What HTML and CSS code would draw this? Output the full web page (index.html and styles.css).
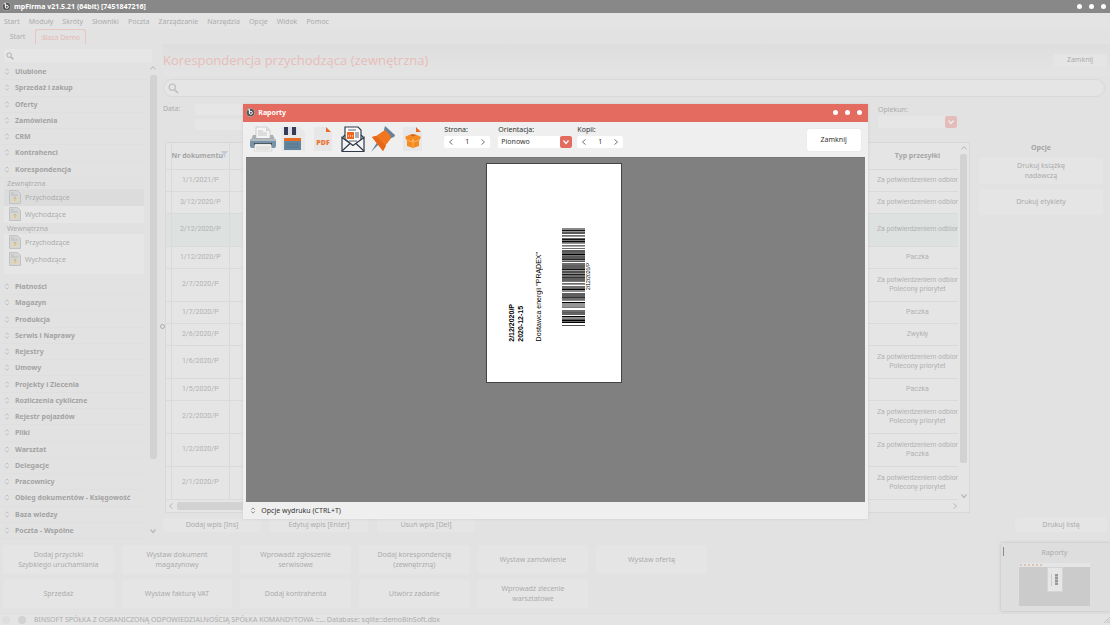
FILE: index.html
```html
<!DOCTYPE html>
<html lang="pl">
<head>
<meta charset="utf-8">
<title>mpFirma v21.5.21</title>
<link rel="stylesheet" href="styles.css">
<script src="app.js" defer></script>
</head>
<body>
<svg class="defs" aria-hidden="true">
  <symbol id="logo" viewBox="0 0 12 12"><circle cx="6" cy="6" r="5.4" fill="#555" stroke="#bbb" stroke-width=".8"/><path d="M2.500 2.600 4.600 2v4M4.400 6.400a2 2 0 1 0 4 0 2 2 0 1 0-4 0" fill="none" stroke="#fff" stroke-width="1.300"/></symbol>
  <symbol id="sort" viewBox="0 0 6 8"><path d="M1 3 3 1l2 2M1 5l2 2 2-2" fill="none" stroke="currentColor"/></symbol>
  <symbol id="search" viewBox="0 0 12 12"><circle cx="4.7" cy="4.7" r="3.4" fill="none" stroke="currentColor" stroke-width="1.4"/><path d="m7.4 7.4 3.6 3.6" stroke="currentColor" stroke-width="2"/></symbol>
  <symbol id="up" viewBox="0 0 8 8"><path d="m1.5 5.5 2.500-3 2.500 3" fill="none" stroke="currentColor"/></symbol>
  <symbol id="down" viewBox="0 0 8 8"><path d="m1.500 2.500 2.500 3 2.500-3" fill="none" stroke="currentColor" stroke-width="1.200"/></symbol>
  <symbol id="left" viewBox="0 0 8 8"><path d="m5.500 1.500-3 2.500 3 2.500" fill="none" stroke="currentColor"/></symbol>
  <symbol id="right" viewBox="0 0 8 8"><path d="m2.500 1.500 3 2.500-3 2.500" fill="none" stroke="currentColor"/></symbol>
  <symbol id="file" viewBox="0 0 12 14"><path d="M.5.5h8l3 3v10H.5z" fill="#d3d5d6" stroke="#c0c2c4"/><path d="M2 3h3M2 5h7" stroke="#bbb"/><path d="M3 7h6v5H3z" fill="#e3d6b4"/><path d="M6 7v4M4.500 8.500 6 7l1.500 1.500" fill="none" stroke="#b9b3a3" stroke-width=".8"/></symbol>
</svg>
<div class="app">
  <header class="titlebar">
    <svg class="logo"><use href="#logo"/></svg><span>mpFirma v21.5.21 (64bit) [7451847216]</span>
    <span class="dots"><i></i><i></i><i></i></span>
  </header>
  <nav class="menubar">
    <a href="#">Start</a><a href="#">Moduły</a><a href="#">Skróty</a><a href="#">Słowniki</a><a href="#">Poczta</a><a href="#">Zarządzanie</a><a href="#">Narzędzia</a><a href="#">Opcje</a><a href="#">Widok</a><a href="#">Pomoc</a>
  </nav>
  <div class="tabs"><button class="tab">Start</button><button class="tab active">:Baza Demo</button></div>

  <div class="workspace">
    <aside class="sidebar">
      <label class="side-search"><svg class="ic8"><use href="#search"/></svg><input type="text" aria-label="Szukaj modułu"></label>
      <div class="side-body">
        <div class="side-list">
          <button class="group"><svg><use href="#sort"/></svg>Ulubione</button>
          <button class="group"><svg><use href="#sort"/></svg>Sprzedaż i zakup</button>
          <button class="group"><svg><use href="#sort"/></svg>Oferty</button>
          <button class="group"><svg><use href="#sort"/></svg>Zamówienia</button>
          <button class="group"><svg><use href="#sort"/></svg>CRM</button>
          <button class="group"><svg><use href="#sort"/></svg>Kontrahenci</button>
          <button class="group"><svg><use href="#sort"/></svg>Korespondencja</button>
          <div class="subpanel">
            <h3>Zewnętrzna</h3>
            <a href="#" class="selected"><svg><use href="#file"/></svg>Przychodzące</a>
            <a href="#"><svg><use href="#file"/></svg>Wychodzące</a>
            <h3>Wewnętrzna</h3>
            <a href="#"><svg><use href="#file"/></svg>Przychodzące</a>
            <a href="#"><svg><use href="#file"/></svg>Wychodzące</a>
          </div>
          <button class="group"><svg><use href="#sort"/></svg>Płatności</button>
          <button class="group"><svg><use href="#sort"/></svg>Magazyn</button>
          <button class="group"><svg><use href="#sort"/></svg>Produkcja</button>
          <button class="group"><svg><use href="#sort"/></svg>Serwis i Naprawy</button>
          <button class="group"><svg><use href="#sort"/></svg>Rejestry</button>
          <button class="group"><svg><use href="#sort"/></svg>Umowy</button>
          <button class="group"><svg><use href="#sort"/></svg>Projekty i Zlecenia</button>
          <button class="group"><svg><use href="#sort"/></svg>Rozliczenia cykliczne</button>
          <button class="group"><svg><use href="#sort"/></svg>Rejestr pojazdów</button>
          <button class="group"><svg><use href="#sort"/></svg>Pliki</button>
          <button class="group"><svg><use href="#sort"/></svg>Warsztat</button>
          <button class="group"><svg><use href="#sort"/></svg>Delegacje</button>
          <button class="group"><svg><use href="#sort"/></svg>Pracownicy</button>
          <button class="group"><svg><use href="#sort"/></svg>Obieg dokumentów - Księgowość</button>
          <button class="group"><svg><use href="#sort"/></svg>Baza wiedzy</button>
          <button class="group"><svg><use href="#sort"/></svg>Poczta - Wspólne</button>
        </div>
        <div class="vscroll side-scroll"><svg class="ic8"><use href="#up"/></svg><i></i><svg class="ic8"><use href="#down"/></svg></div>
      </div>
    </aside>
    <div class="splitter"><i></i></div>

    <main class="main">
      <div class="heading"><h1>Korespondencja przychodząca (zewnętrzna)</h1><button class="btn">Zamknij</button></div>
      <label class="search"><svg><use href="#search"/></svg><input type="text" aria-label="Szukaj"></label>
      <div class="content">
        <div class="left">
          <div class="filters">
            <div class="date"><label for="d1">Data:</label><div><input id="d1" type="text"><input type="text" aria-label="Data do"></div></div>
            <div class="owner"><label for="own">Opiekun:</label><div class="combo"><select id="own"><option></option></select><span><svg class="ic8"><use href="#down"/></svg></span></div></div>
          </div>
          <div class="grid">
            <div class="grid-top">
              <table>
                <colgroup><col class="c-gut"><col class="c-nr"><col><col class="c-type"></colgroup>
                <thead><tr><th></th><th class="sorted">Nr dokumentu<svg class="funnel" viewBox="0 0 8 8"><path d="M0 0h8L5 4v4L3 6V4z"/></svg></th><th></th><th>Typ przesyłki</th></tr></thead>
                <tbody>
                  <tr><td></td><td>1/1/2021/P</td><td></td><td>Za potwierdzeniem odbior</td></tr>
                  <tr><td></td><td>3/12/2020/P</td><td></td><td>Za potwierdzeniem odbior</td></tr>
                  <tr class="tall current"><td></td><td>2/12/2020/P</td><td></td><td>Za potwierdzeniem odbior</td></tr>
                  <tr><td></td><td>1/12/2020/P</td><td></td><td>Paczka</td></tr>
                  <tr class="tall"><td></td><td>2/7/2020/P</td><td></td><td>Za potwierdzeniem odbior<br>Polecony priorytet</td></tr>
                  <tr><td></td><td>1/7/2020/P</td><td></td><td>Paczka</td></tr>
                  <tr><td></td><td>2/6/2020/P</td><td></td><td>Zwykły</td></tr>
                  <tr class="tall"><td></td><td>1/6/2020/P</td><td></td><td>Za potwierdzeniem odbior<br>Polecony priorytet</td></tr>
                  <tr><td></td><td>1/5/2020/P</td><td></td><td>Paczka</td></tr>
                  <tr class="tall"><td></td><td>2/2/2020/P</td><td></td><td>Za potwierdzeniem odbior<br>Polecony priorytet</td></tr>
                  <tr class="tall"><td></td><td>1/2/2020/P</td><td></td><td>Za potwierdzeniem odbior<br>Paczka</td></tr>
                  <tr class="tall"><td></td><td>2/1/2020/P</td><td></td><td>Za potwierdzeniem odbior<br>Polecony priorytet</td></tr>
                </tbody>
              </table>
              <div class="vscroll grid-scroll"><svg class="ic8"><use href="#up"/></svg><i></i><svg class="ic8"><use href="#down"/></svg></div>
            </div>
            <div class="hscroll"><svg class="ic8"><use href="#left"/></svg><i></i><svg class="ic8"><use href="#right"/></svg></div>
          </div>
        </div>
        <section class="options"><h2>Opcje</h2><button class="btn">Drukuj książkę<br>nadawczą</button><button class="btn">Drukuj etykiety</button></section>
      </div>
      <div class="actions"><button class="btn">Dodaj wpis [Ins]</button><button class="btn">Edytuj wpis [Enter]</button><button class="btn">Usuń wpis [Del]</button><button class="btn print">Drukuj listę</button></div>
    </main>
  </div>

  <div class="quick">
    <button class="btn">Dodaj przyciski<br>Szybkiego uruchamiania</button><button class="btn">Wystaw dokument<br>magazynowy</button><button class="btn">Wprowadź zgłoszenie<br>serwisowe</button><button class="btn">Dodaj korespondencję<br>(zewnętrzną)</button><button class="btn">Wystaw zamówienie</button><button class="btn">Wystaw ofertę</button>
    <button class="btn">Sprzedaż</button><button class="btn">Wystaw fakturę VAT</button><button class="btn">Dodaj kontrahenta</button><button class="btn">Utwórz zadanie</button><button class="btn">Wprowadź zlecenie<br>warsztatowe</button>
  </div>
  <footer class="status"><i></i><i class="dark"></i><span>BINSOFT SPÓŁKA Z OGRANICZONĄ ODPOWIEDZIALNOŚCIĄ SPÓŁKA KOMANDYTOWA ::... Database: sqlite::demoBinSoft.dbx</span><svg viewBox="0 0 8 8"><path d="M1 8 8 1M4 8l4-4M6.500 8 8 6.500" stroke="#bbb"/></svg></footer>
</div>

<aside class="preview">
  <h2>Raporty</h2>
  <div class="thumb"><div class="thumb-tools"><i></i><i></i><i></i><i></i><i></i><i></i></div><div class="thumb-view"><div class="thumb-page"><b></b><i></i></div></div></div>
</aside>

<div class="overlay">
  <section class="dialog" role="dialog" aria-label="Raporty">
    <header class="dialog-title"><svg class="logo"><use href="#logo"/></svg><span>Raporty</span><span class="dots"><i></i><i></i><i></i></span></header>
    <div class="toolbar">
      <div class="tools">
        <button aria-label="Drukuj"><svg viewBox="0 0 26 26"><path d="M6 1h11l3 3v9H6z" fill="#f4f4f4" stroke="#bbb" stroke-width=".6"/><path d="M16 1v4h4" fill="#d5d5d5"/><path d="M8 5h5M8 7h9M8 9h9" stroke="#b9b9b9" stroke-width=".8"/><path d="M3 9h3v3h14V9h3l2 5H1z" fill="#a9b0b3"/><path d="M0 13h26v7q0 2-2 2H2q-2 0-2-2z" fill="#7893a7"/><path d="M0 13h26v2H0z" fill="#b4bcc0"/><path d="M4 17h18v2H4z" fill="#33424d"/><path d="M5 18h16l1 7H4z" fill="#f2f2ee" stroke="#bbb" stroke-width=".4"/><path d="M6 21h14M6 23h14" stroke="#c5c5c5" stroke-width=".7"/></svg></button>
        <button aria-label="Zapisz"><svg viewBox="0 0 26 26"><path d="M1 1h19l5 5v19H1z" fill="#e8e8e8"/><path d="M4 1h13v8H4z" fill="#dcdfe5"/><path d="M4 1h4v8H4zM12 1h4v8h-4z" fill="#343c57"/><path d="M4 12h17v12H4z" fill="#64859c"/><path d="M4 12h17v3H4z" fill="#e96d24"/><path d="M6 18h13M6 21h13" stroke="#547489"/></svg></button>
        <button aria-label="PDF"><svg viewBox="0 0 26 26"><path d="M4 1h12l6 6v18H4z" fill="#e7e7e7"/><path d="M16 1l5 5h-5z" fill="#e96d24"/><text x="13" y="19" class="pdf">PDF</text></svg></button>
        <button aria-label="Wyślij e-mail"><svg viewBox="0 0 26 26"><path d="M5 13V1h13l3 3v10l-8 6z" fill="#fff" stroke="#303a49" stroke-width="1.200"/><path d="M2 11.500v14h22v-14l-11 8z" fill="#f4f4f4" stroke="#303a49" stroke-width="1.200"/><path d="m2 25 8-7.500M24 25l-8-7.500M2 12l3-3M24 12l-3-3" fill="none" stroke="#303a49" stroke-width="1.200"/><path d="M7 6h7v7H7z" fill="#f1661c"/><path d="M8 4h8M15 7h4M15 9h4M15 11h4M9 15h8" stroke="#303a49" stroke-width=".8"/><path d="M8 10h5" stroke="#fff" stroke-dasharray="1 1"/></svg></button>
        <button aria-label="Przypnij"><svg viewBox="0 0 26 26"><path d="m10 17-9 9 7-11z" fill="#66839b"/><path d="m2 11 4-1 9-6V1l10 9-3 1-7 9-2 5z" fill="#f1761f"/><path d="m6 10 10 10-3 5L2 11z" fill="#e66718"/><path d="m15 0 10 9-1 2-3 1-7-8z" fill="#66839b"/><path d="m15 4 6 6-5 5-6-7z" fill="#f1761f"/></svg></button>
        <button aria-label="Archiwum"><svg viewBox="0 0 26 26"><path d="M3 1h13l6 6v18H3z" fill="#e7e7e7"/><path d="M16 1l5 5h-5z" fill="#e96d24"/><path d="m5 11 4-2 4 2 4-2 4 2-2 4v5l-6 2-6-2v-5z" fill="#f58a1e"/><path d="m9 9 4 2 4-2-4-1z" fill="#d8650e"/><path d="m7 14 5 2 1-3 1 3 5-2M13 14v7" fill="none" stroke="#ffc078" stroke-width=".7"/></svg></button>
      </div>
      <div class="field"><label for="pg">Strona:</label><div class="spin"><button aria-label="Poprzednia"><svg class="ic8"><use href="#left"/></svg></button><input id="pg" type="text" value="1"><button aria-label="Następna"><svg class="ic8"><use href="#right"/></svg></button></div></div>
      <div class="field orient"><label for="or">Orientacja:</label><div class="combo live"><select id="or"><option>Pionowo</option></select><span><svg class="ic8"><use href="#down"/></svg></span></div></div>
      <div class="field"><label for="cp">Kopii:</label><div class="spin"><button aria-label="Mniej"><svg class="ic8"><use href="#left"/></svg></button><input id="cp" type="text" value="1"><button aria-label="Więcej"><svg class="ic8"><use href="#right"/></svg></button></div></div>
      <button class="close">Zamknij</button>
    </div>
    <div class="viewer">
      <article class="page">
        <p class="bold">2/12/2020/P<br>2020-12-15</p>
        <p class="name">Dostawca energii "PRĄDEX"</p>
        <div class="code"><svg id="barcode" viewBox="0 0 23 98" preserveAspectRatio="none"></svg><p>2/12/2020/P</p></div>
      </article>
    </div>
    <button class="print-options"><svg><use href="#sort"/></svg>Opcje wydruku (CTRL+T)</button>
  </section>
</div>
</body>
</html>
```
FILE: app.js
```js
// Each entry is [first row, row count, grey level]; uncovered rows stay white.
const bars = [[0,2,136],[2,1,20],[3,1,150],[4,2,90],[7,1,110],[8,1,150],[10,1,100],[11,1,20],[12,1,120],[13,1,10],[14,1,110],[15,1,150],[17,1,120],[18,1,170],[20,1,110],[22,2,90],[24,2,100],[26,1,0],[27,1,120],[28,3,90],[31,1,40],[32,1,150],[33,1,90],[35,2,110],[37,4,95],[41,1,20],[42,1,150],[43,2,80],[45,1,140],[46,1,30],[47,2,110],[49,1,50],[50,3,95],[53,1,120],[55,1,110],[56,1,150],[58,2,110],[60,1,100],[61,1,0],[62,2,140],[65,4,95],[69,1,50],[70,2,110],[72,1,140],[74,1,0],[75,4,150],[79,1,120],[82,2,110],[84,1,90],[85,2,100],[88,1,0],[89,2,140],[91,1,90],[92,1,0],[93,1,110],[94,1,0],[97,1,80]];
document.getElementById('barcode').innerHTML = bars.map(([y, h, g]) => `<rect x="0" y="${y}" width="23" height="${h}" fill="rgb(${g},${g},${g})"/>`).join('');
```
FILE: styles.css
```css
* { box-sizing: border-box; }
html, body { margin: 0; height: 100%; }
body { background: #e2e2e2; color: #acacac; font: 7px/9px "Noto Sans", "Open Sans", sans-serif; overflow: hidden; position: relative; }
button, input, select { font: inherit; color: inherit; border: 0; background: none; padding: 0; margin: 0; min-width: 0; border-radius: 2px; }
a { color: inherit; text-decoration: none; }
h1, h2, h3, p { margin: 0; font: inherit; }
svg { display: block; flex: none; }
.defs { display: none; }
.ic8 { width: 8px; height: 8px; }
.logo { width: 9px; height: 9px; }
.app { min-height: 100vh; display: flex; flex-direction: column; }

.titlebar { display: flex; align-items: center; gap: 3px; height: 13px; padding: 0 4px 1px 2px; background: #888; color: #fff; font-weight: 700; }
.dots { display: flex; gap: 7px; margin-left: auto; }
.dots i { width: 5px; height: 5px; border-radius: 50%; background: #fff; }
.menubar { display: flex; align-items: center; gap: 9px; height: 16px; padding: 0 4px; background: #e4e4e4; }
.tabs { display: flex; height: 15px; }
.tab { width: 35px; }
.tab.active { width: 51px; border: 1px solid #e6c5c3; border-bottom: 0; color: #e6b9b6; border-radius: 3px 3px 0 0; }

.workspace { flex: 1; display: flex; min-height: 0; }
.sidebar { width: 157px; display: flex; flex-direction: column; padding-top: 5px; }
.side-search { display: flex; align-items: center; height: 13px; margin: 0 5px 2px 4px; padding-left: 2px; background: #e6e6e6; border-radius: 2px; }
.side-search input { flex: 1; }
.side-body { flex: 1; display: flex; }
.side-list { flex: 1; display: flex; flex-direction: column; padding-right: 1px; }
.group { flex: 1; display: flex; align-items: center; gap: 5px; padding-left: 4px; border-bottom: 1px solid #dfdfdf; font-weight: 700; color: #a2a2a2; text-align: left; }
.group svg { width: 6px; height: 7px; color: #bbb; }
.subpanel { margin: 0 4px 5px; padding-bottom: 6px; background: #e6e6e6; }
.subpanel h3 { padding: 1px 3px 0; height: 11px; background: #e1e1e1; }
.subpanel a { display: flex; align-items: center; gap: 4px; height: 17px; padding-left: 5px; }
.subpanel a svg { width: 12px; height: 14px; }
.subpanel a.selected { background: #dcdcdc; }
.vscroll { display: flex; flex-direction: column; align-items: center; width: 8px; color: #b8b8b8; }
.vscroll i { width: 7px; background: #d2d2d2; border-radius: 2px; }
.side-scroll i { flex: 0 1 384px; margin: 3px 0 auto; }
.side-scroll { padding-bottom: 4px; }
.splitter { width: 6px; display: flex; align-items: center; justify-content: flex-end; padding-top: 70px; }
.splitter i { width: 5px; height: 5px; margin-right: -2px; border: 1px solid #aaa; border-radius: 50%; }

.main { flex: 1; display: flex; flex-direction: column; min-width: 0; }
.heading { display: flex; align-items: center; justify-content: space-between; height: 32px; padding: 0 3px 0 0; background: linear-gradient(#dedede, #e4e4e4); }
h1 { font-family: "Open Sans", sans-serif; font-size: 13px; line-height: 18px; color: #e7bdb9; }
.btn { background: #e5e5e5; border-radius: 3px; line-height: 10px; text-align: center; }
.heading .btn { width: 54px; height: 13px; }
.search { display: flex; align-items: center; height: 18px; margin: 3px 5px 3px 0; padding-left: 4px; border: 1px solid #d9d9d9; border-radius: 9px; background: #e5e5e5; }
.search svg { width: 11px; height: 11px; color: #c2c2c2; }
.search input { flex: 1; }
.content { flex: 1; display: flex; }
.left { flex: 1; display: flex; flex-direction: column; }
.filters { display: flex; justify-content: space-between; height: 42px; padding-top: 4px; }
.date { display: flex; gap: 15px; }
.date div { display: flex; flex-direction: column; gap: 4px; }
.date input { width: 70px; height: 11px; background: #e6e6e6; }
.owner { width: 92px; margin-top: 1px; }
.combo { display: flex; height: 12px; background: #e6e6e6; border-radius: 2px; margin-top: 2px; }
.combo select { flex: 1; appearance: none; }
.combo span { width: 12px; display: grid; place-items: center; background: #e4bdbb; color: #eee; border-radius: 2px; }
.owner .combo { width: 79px; }
.grid { margin-left: 2px; border: 1px solid #d8d8d8; background: #e5e5e5; }
.grid-top { display: flex; }
table { flex: 1; border-collapse: collapse; table-layout: fixed; }
.c-gut { width: 5px; } .c-nr { width: 58px; } .c-type { width: 90px; }
td, th { height: 22px; padding: 0; text-align: center; border-bottom: 1px solid #dadada; border-right: 1px solid #dadada; white-space: nowrap; overflow: hidden; color: #b2b2b2; }
td { font-family: Roboto, sans-serif; }
th { height: 26px; font-weight: 700; color: #a5a5a5; }
td:last-child, th:last-child { border-right: 0; padding-left: 9px; }
.tall td { height: 33px; }
.current { background: #dde1e0; }
.sorted { text-align: right; }
.funnel { display: inline-block; width: 7px; height: 7px; fill: #c3cdd7; margin: 0 1px 0 -2px; }
.grid-scroll { width: 11px; padding: 1px 1px 0; }
.grid-scroll i { flex: 1; margin: 2px 0 29px; }
.hscroll { display: flex; align-items: center; height: 12px; padding: 0 10px 0 1px; color: #b8b8b8; }
.hscroll i { flex: 0 1 420px; height: 8px; margin: 0 auto 0 2px; background: #d2d2d2; border-radius: 2px; }
.options { width: 140px; padding: 43px 7px 0 9px; display: flex; flex-direction: column; gap: 5px; }
.options h2 { font-weight: 700; color: #a5a5a5; text-align: center; margin-bottom: 1px; }
.options .btn { height: 26px; }
.actions { display: flex; gap: 9px; height: 26px; padding: 5px 3px 7px 0; }
.actions .btn { width: 98px; }
.actions .print { width: 92px; margin-left: auto; }

.quick { display: grid; grid-template-columns: repeat(6, 1fr); gap: 5px 8px; margin: 6px 403px 5px 3px; }
.quick .btn { height: 29px; }
.status { display: flex; align-items: center; height: 12px; padding-left: 2px; border-top: 1px solid #dedede; background: #e4e4e4; }
.status i { width: 8px; height: 8px; margin-right: 8px; border-radius: 50%; background: #dedede; }
.status .dark { background: #d2d2d2; }
.status svg { width: 7px; height: 7px; margin-left: auto; }

.preview { position: absolute; right: 0; bottom: 14px; width: 109px; height: 68px; padding: 5px 20px 0 18px; background: #dedede; box-shadow: 0 0 3px #bbb; }
.preview h2 { text-align: center; margin-bottom: 6px; }
.preview::before { content: ""; position: absolute; left: 2px; top: 4px; width: 1px; height: 9px; background: #888; }
.thumb-tools { display: flex; gap: 2px; height: 4px; padding: 1px; background: #e5e5e5; }
.thumb-tools i { width: 2px; height: 2px; background: #dbc3b6; }
.thumb-view { height: 39px; background: #cbcbcb; }
.thumb-page { width: 16px; height: 25px; margin: 0 auto; background: #e6e6e6; border: 1px solid #d5d5d5; display: flex; align-items: center; justify-content: flex-end; gap: 3px; padding-right: 4px; }
.thumb-page b { width: 1px; height: 12px; background: #ccc; }
.thumb-page i { width: 3px; height: 11px; background: repeating-linear-gradient(#999 0 2px, #bbb 2px 3px); }

.overlay { position: absolute; inset: 0 0 2px 1px; display: grid; place-items: center; }
.dialog { width: 56.3%; height: 66.7%; display: flex; flex-direction: column; background: #efefef; color: #333; box-shadow: 0 0 3px #ccc; }
.dialog-title { display: flex; align-items: center; gap: 3px; height: 18px; padding: 0 6px 0 3px; background: #e46b60; color: #fff; font-weight: 700; }
.toolbar { display: flex; height: 35px; padding: 3px 7px 0; }
.tools { display: flex; gap: 4px; margin-right: 18px; }
.tools button { width: 26px; height: 28px; }
.tools svg { width: 26px; height: 26px; }
.pdf { font: 800 7px "Open Sans", sans-serif; text-anchor: middle; fill: #ee7130; }
.field { width: 46px; margin-right: 8px; }
.field label { display: block; height: 9px; }
.field.orient { width: 74px; margin-right: 5px; }
.spin { display: flex; align-items: center; height: 12px; margin-top: 2px; background: #fff; border-radius: 2px; }
.spin button { width: 14px; display: grid; place-items: center; color: #777; }
.spin input { flex: 1; text-align: center; width: 10px; }
.live { background: #fff; }
.live select { padding-left: 3px; }
.live span { background: #e46b60; color: #fff; }
.close { width: 54px; height: 22px; margin: 4px 0 0 auto; background: #fff; box-shadow: 0 0 1px #ccc; }
.viewer { flex: 1; margin: 0 3px; padding-top: 5px; background: #808080; border-top: 1px solid #777; display: flex; justify-content: center; align-items: flex-start; min-height: 0; }
.page { width: 136px; height: 220px; margin-right: 3px; padding: 0 0 40px 20px; background: #fff; border: 1px solid #444; color: #000; display: flex; align-items: flex-end; font-family: "Liberation Sans", Arial, sans-serif; }
.page p { writing-mode: vertical-rl; transform: rotate(180deg); white-space: nowrap; }
.bold { font-weight: 700; }
.page .name { margin-left: 9px; }
.code { display: flex; align-items: center; margin: 0 0 16px 19px; }
.code svg { width: 23px; height: 98px; }
.code p { font-size: 5px; line-height: 6px; }
.print-options { display: flex; align-items: center; gap: 5px; height: 17px; padding-left: 7px; text-align: left; }
.print-options svg { width: 6px; height: 7px; color: #777; }
```
